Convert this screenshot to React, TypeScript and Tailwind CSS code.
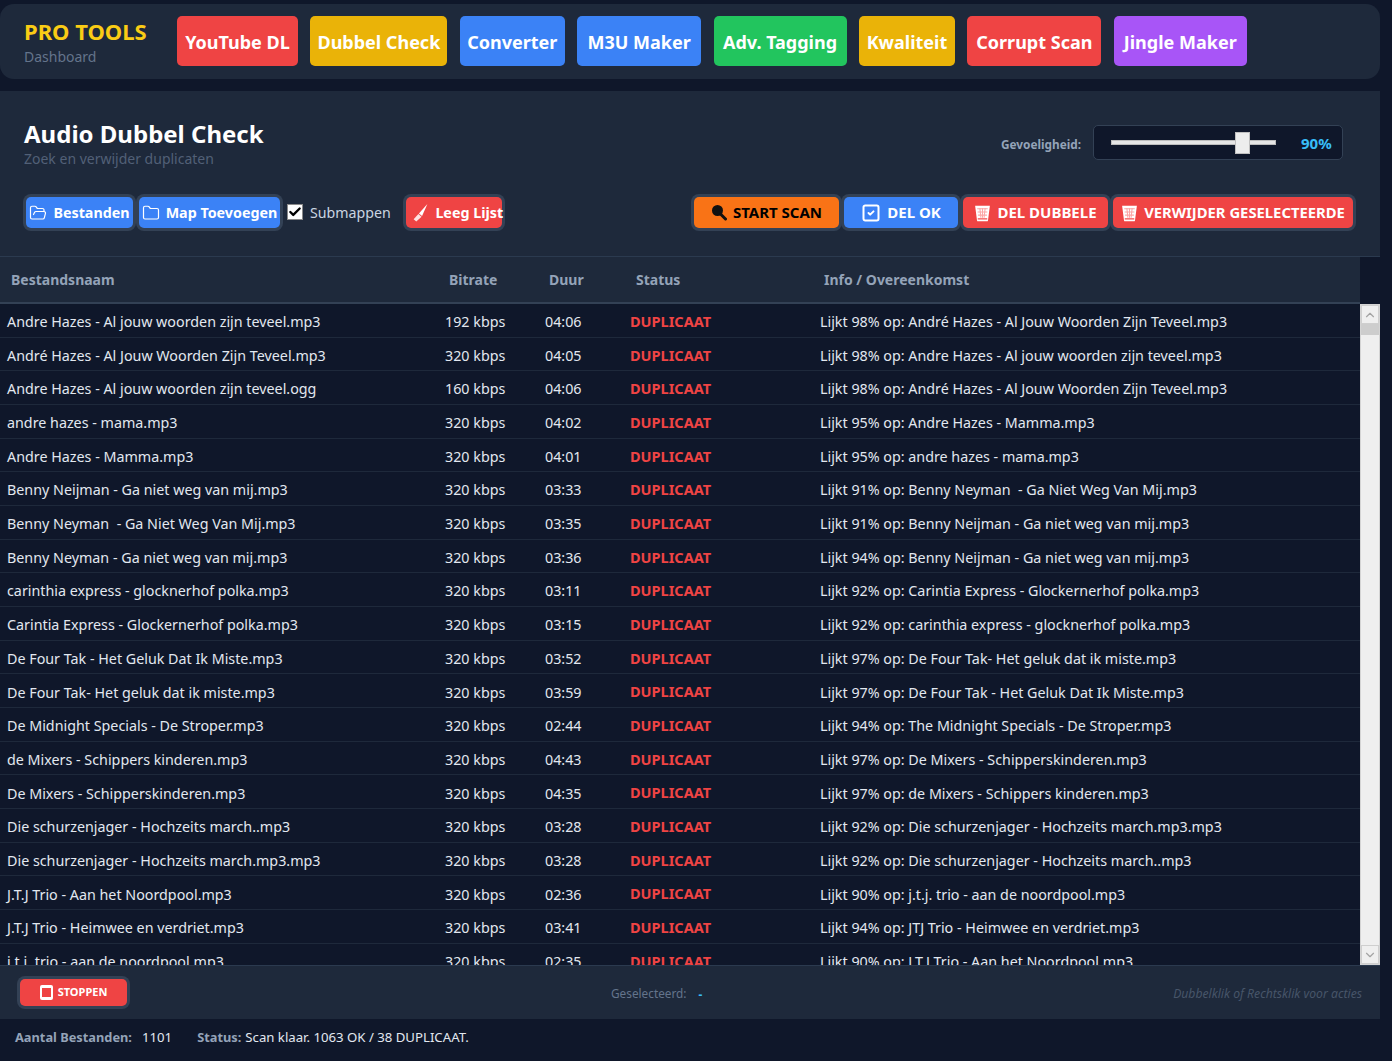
import { ChevronDown, ChevronUp, Folder, FolderOpen, SquareCheck, Check } from 'lucide-react'
import type { ReactNode } from 'react'

const navItems = [
  { label: 'YouTube DL', color: 'bg-[#ef4444]', width: 'w-[121px]' },
  { label: 'Dubbel Check', color: 'bg-[#eab308]', width: 'w-[137px]' },
  { label: 'Converter', color: 'bg-[#3b82f6]', width: 'w-[105px]' },
  { label: 'M3U Maker', color: 'bg-[#3b82f6]', width: 'w-[124px]' },
  { label: 'Adv. Tagging', color: 'bg-[#22c55e]', width: 'w-[133px]' },
  { label: 'Kwaliteit', color: 'bg-[#eab308]', width: 'w-[96px]' },
  { label: 'Corrupt Scan', color: 'bg-[#ef4444]', width: 'w-[134px]' },
  { label: 'Jingle Maker', color: 'bg-[#a855f7]', width: 'w-[133px]' },
]

const rows = [
  ['Andre Hazes - Al jouw woorden zijn teveel.mp3', '192 kbps', '04:06', 'Lijkt 98% op: André Hazes - Al Jouw Woorden Zijn Teveel.mp3'],
  ['André Hazes - Al Jouw Woorden Zijn Teveel.mp3', '320 kbps', '04:05', 'Lijkt 98% op: Andre Hazes - Al jouw woorden zijn teveel.mp3'],
  ['Andre Hazes - Al jouw woorden zijn teveel.ogg', '160 kbps', '04:06', 'Lijkt 98% op: André Hazes - Al Jouw Woorden Zijn Teveel.mp3'],
  ['andre hazes - mama.mp3', '320 kbps', '04:02', 'Lijkt 95% op: Andre Hazes - Mamma.mp3'],
  ['Andre Hazes - Mamma.mp3', '320 kbps', '04:01', 'Lijkt 95% op: andre hazes - mama.mp3'],
  ['Benny Neijman - Ga niet weg van mij.mp3', '320 kbps', '03:33', 'Lijkt 91% op: Benny Neyman  - Ga Niet Weg Van Mij.mp3'],
  ['Benny Neyman  - Ga Niet Weg Van Mij.mp3', '320 kbps', '03:35', 'Lijkt 91% op: Benny Neijman - Ga niet weg van mij.mp3'],
  ['Benny Neyman - Ga niet weg van mij.mp3', '320 kbps', '03:36', 'Lijkt 94% op: Benny Neijman - Ga niet weg van mij.mp3'],
  ['carinthia express - glocknerhof polka.mp3', '320 kbps', '03:11', 'Lijkt 92% op: Carintia Express - Glockernerhof polka.mp3'],
  ['Carintia Express - Glockernerhof polka.mp3', '320 kbps', '03:15', 'Lijkt 92% op: carinthia express - glocknerhof polka.mp3'],
  ['De Four Tak - Het Geluk Dat Ik Miste.mp3', '320 kbps', '03:52', 'Lijkt 97% op: De Four Tak- Het geluk dat ik miste.mp3'],
  ['De Four Tak- Het geluk dat ik miste.mp3', '320 kbps', '03:59', 'Lijkt 97% op: De Four Tak - Het Geluk Dat Ik Miste.mp3'],
  ['De Midnight Specials - De Stroper.mp3', '320 kbps', '02:44', 'Lijkt 94% op: The Midnight Specials - De Stroper.mp3'],
  ['de Mixers - Schippers kinderen.mp3', '320 kbps', '04:43', 'Lijkt 97% op: De Mixers - Schipperskinderen.mp3'],
  ['De Mixers - Schipperskinderen.mp3', '320 kbps', '04:35', 'Lijkt 97% op: de Mixers - Schippers kinderen.mp3'],
  ['Die schurzenjager - Hochzeits march..mp3', '320 kbps', '03:28', 'Lijkt 92% op: Die schurzenjager - Hochzeits march.mp3.mp3'],
  ['Die schurzenjager - Hochzeits march.mp3.mp3', '320 kbps', '03:28', 'Lijkt 92% op: Die schurzenjager - Hochzeits march..mp3'],
  ['J.T.J Trio - Aan het Noordpool.mp3', '320 kbps', '02:36', 'Lijkt 90% op: j.t.j. trio - aan de noordpool.mp3'],
  ['J.T.J Trio - Heimwee en verdriet.mp3', '320 kbps', '03:41', 'Lijkt 94% op: JTJ Trio - Heimwee en verdriet.mp3'],
  ['j.t.j. trio - aan de noordpool.mp3', '320 kbps', '02:35', 'Lijkt 90% op: J.T.J Trio - Aan het Noordpool.mp3'],
]

function Trash() {
  return (
    <svg width="17" height="19" viewBox="0 0 16 18" className="shrink-0">
      <path d="M1 2.5h14l-1.8 14a1 1 0 0 1-1 .9H3.8a1 1 0 0 1-1-.9z" fill="#fff" />
      <path d="M3 5.5h10M3.4 8.5h9.2M3.8 11.5h8.4" stroke="#fca5a5" strokeWidth="1" />
      <path d="M5.5 5l1 9M8 5v9M10.5 5l-1 9" stroke="#fca5a5" strokeWidth="1" />
      <path d="M3.5 15h9" stroke="#f87171" strokeWidth="1.5" />
    </svg>
  )
}

function Brush() {
  return (
    <svg width="17" height="19" viewBox="0 0 16 18" className="shrink-0">
      <path d="M14.5 1 6.5 10l3 2.2z" fill="#fff" />
      <path d="M6 10.5 1.5 15.5l2.5 2 5-4.5z" fill="#fee2e2" />
    </svg>
  )
}

function Magnifier() {
  return (
    <svg width="16" height="17" viewBox="0 0 16 17" className="shrink-0">
      <circle cx="6.5" cy="6.5" r="5.5" fill="#111" />
      <path d="M10 10.5 14.5 15" stroke="#111" strokeWidth="3" strokeLinecap="round" />
    </svg>
  )
}

function ActionButton({ color, width, text = 'text-white', size = 'text-[14.3px]', className = '', children }: { color: string; width: string; text?: string; size?: string; className?: string; children: ReactNode }) {
  return (
    <button className={`${color} ${width} ${text} ${size} ${className} flex h-[31px] shrink-0 items-center justify-center gap-[6px] whitespace-nowrap rounded-[5px] font-bold shadow-[0_0_0_3px_#334155]`}>
      {children}
    </button>
  )
}

export default function App() {
  return (
    <div className="h-[1061px] w-[1392px] overflow-hidden bg-[#0f172a] pt-1 font-['Noto_Sans',sans-serif] text-[#e2e8f0]">
      {/* Top nav */}
      <nav className="flex h-[75px] w-[1380px] items-center rounded-[14px] bg-[#1e293b] pl-6">
        <div className="w-[153px] shrink-0">
          <div className="text-[22px] leading-[28px] font-bold text-[#facc15]">PRO TOOLS</div>
          <div className="pt-[1px] text-[14px] leading-[21px] text-[#64748b]">Dashboard</div>
        </div>
        <div className="mb-[2px] flex gap-[12.4px]">
          {navItems.map((item) => (
            <button key={item.label} className={`${item.color} ${item.width} flex h-[50px] items-center justify-center rounded-[5px] pt-[4px] text-[18px] font-bold whitespace-nowrap text-white`}>
              {item.label}
            </button>
          ))}
        </div>
      </nav>

      {/* Panel header */}
      <section className="mt-[12px] h-[166px] w-[1380px] border-b border-[#2b3a4f] bg-[#1e293b] pl-6">
        <div className="flex h-[96px] items-center justify-between pt-[8px] pr-[37px]">
          <div>
            <h1 className="text-[24px] leading-[32px] font-bold text-white">Audio Dubbel Check</h1>
            <p className="text-[14px] leading-[18px] text-[#526077]">Zoek en verwijder duplicaten</p>
          </div>
          <div className="-mt-[2px] flex items-center gap-[12px]">
            <span className="pt-[6px] text-[11.8px] font-bold text-[#94a3b8]">Gevoeligheid:</span>
            <div className="flex h-[35px] w-[250px] items-center rounded-[5px] border border-[#334155] bg-[#0f172a] pl-[17px]">
              <div className="relative h-[5px] w-[165px] border border-[#bdbdbd] bg-[#e6e6e6]">
                <span className="absolute top-[-9px] left-[123px] h-[22px] w-[15px] border border-[#c0c0c0] bg-[#ededed]" />
              </div>
              <span className="ml-[25px] pt-[2px] text-[15px] font-bold text-[#38bdf8]">90%</span>
            </div>
          </div>
        </div>
        <div className="mt-[10px] flex h-[31px] items-center pr-[27px]">
          <ActionButton color="bg-[#3b82f6]" width="w-[107px]" className="ml-[2px]"><FolderOpen size={18} strokeWidth={1.6} />Bestanden</ActionButton>
          <ActionButton color="bg-[#3b82f6]" width="w-[141px]" className="ml-[6px]"><Folder size={18} strokeWidth={1.6} />Map Toevoegen</ActionButton>
          <label className="ml-[7px] flex items-center gap-[7px] text-[14.2px] text-[#cbd5e1]">
            <span className="flex h-[16px] w-[16px] items-center justify-center border border-[#8a8a8a] bg-white">
              <Check size={14} strokeWidth={4} className="text-black" />
            </span>
            Submappen
          </label>
          <ActionButton color="bg-[#ef4444]" width="w-[96px]" className="ml-[15px] pl-[8px]"><Brush />Leeg Lijst</ActionButton>
          <div className="ml-auto flex gap-[5px]">
            <ActionButton color="bg-[#f97316]" width="w-[145px]" text="text-black" size="text-[15px]"><Magnifier />START SCAN</ActionButton>
            <ActionButton color="bg-[#3b82f6]" width="w-[114px]" size="text-[15px]"><SquareCheck size={20} strokeWidth={2.4} />DEL OK</ActionButton>
            <ActionButton color="bg-[#ef4444]" width="w-[145px]" size="text-[15px]"><Trash />DEL DUBBELE</ActionButton>
            <ActionButton color="bg-[#ef4444]" width="w-[240px]" size="text-[14.8px]"><Trash />VERWIJDER GESELECTEERDE</ActionButton>
          </div>
        </div>
      </section>

      {/* Table */}
      <div className="w-[1380px]">
        <div className="relative h-[47px] w-[1360px] border-b-[2px] border-[#334155] bg-[#1e293b] text-[14px] font-bold text-[#94a3b8]">
          <div className="grid h-full grid-cols-[438px_100px_87px_188px_1fr] items-center pl-[11px]">
            <span>Bestandsnaam</span>
            <span>Bitrate</span>
            <span>Duur</span>
            <span>Status</span>
            <span>Info / Overeenkomst</span>
          </div>
        </div>
        <div className="flex h-[661px]">
          <div className="h-full w-[1360px] overflow-hidden">
            {rows.map((row) => (
              <div key={row[0]} className="grid h-[33.68px] grid-cols-[438px_100px_85px_190px_1fr] items-center border-b border-[#1e293b] bg-[#0f172a] pt-[3px] pl-[7px] text-[14.3px] whitespace-pre">
                <span>{row[0]}</span>
                <span>{row[1]}</span>
                <span>{row[2]}</span>
                <span className="text-[14.5px] font-bold text-[#ef4444]">DUPLICAAT</span>
                <span>{row[3]}</span>
              </div>
            ))}
          </div>
          {/* Scrollbar */}
          <div className="flex h-full w-[20px] flex-col border border-[#d4d4d4] bg-[#efefef]">
            <div className="flex h-[19px] items-center justify-center border border-[#cfcfcf] text-[#a3a3a3]"><ChevronUp size={14} /></div>
            <div className="h-[11px] bg-[#cdcdcd]" />
            <div className="flex-1" />
            <div className="flex h-[19px] items-center justify-center border border-[#cfcfcf] text-[#a3a3a3]"><ChevronDown size={14} /></div>
          </div>
        </div>
      </div>

      {/* Footer bar */}
      <div className="relative flex h-[54px] w-[1380px] items-center justify-between border-t border-[#2b3a4f] bg-[#1e293b] pr-[18px] pl-[20px]">
        <button className="flex h-[27px] w-[107px] items-center justify-center gap-[5px] rounded-[5px] bg-[#ef4444] text-[11px] font-bold text-white shadow-[0_0_0_3px_#334155]">
          <span className="flex h-[15px] w-[13px] items-center justify-center rounded-[2px] bg-white">
            <span className="h-[9px] w-[9px] bg-[#ef4444]" />
          </span>
          STOPPEN
        </button>
        <div className="absolute top-[17px] left-[611px] flex items-center text-[11.8px] text-[#64748b]">
          <span>Geselecteerd:</span>
          <span className="mt-[3px] ml-[12px] font-bold text-[#38bdf8]">-</span>
        </div>
        <span className="pt-[3px] text-[12.2px] text-[#475569] italic">Dubbelklik of Rechtsklik voor acties</span>
      </div>

      {/* Status */}
      <div className="flex h-[38px] items-center pl-[15px]">
        <span className="text-[12.8px] font-bold text-[#94a3b8]">Aantal Bestanden:</span>
        <span className="ml-[10px] text-[13.2px]">1101</span>
        <span className="ml-[25px] text-[12.8px] font-bold text-[#94a3b8]">Status:</span>
        <span className="ml-[4px] text-[13.2px]">Scan klaar. 1063 OK / 38 DUPLICAAT.</span>
      </div>
    </div>
  )
}
